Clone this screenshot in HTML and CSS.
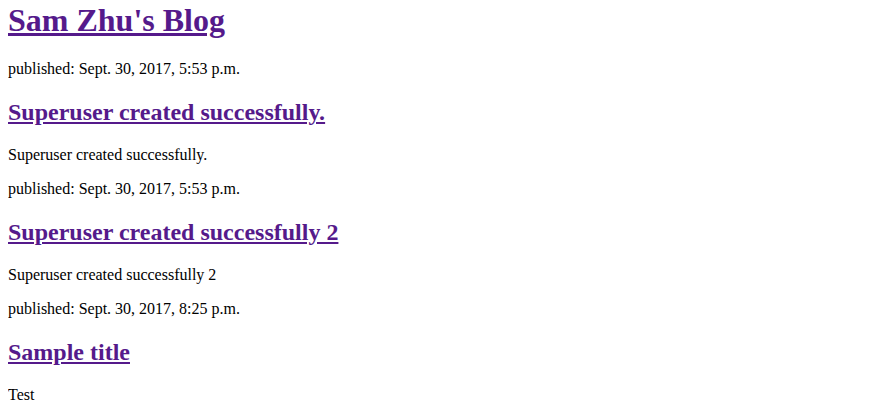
FILE: index.html
```html
<!DOCTYPE html>
<html>
<head>
<meta charset="utf-8">
<link rel="stylesheet" href="styles.css">
</head>
<body>
<h1 class="site-title"><a href="#">Sam Zhu's Blog</a></h1>
<div class="post">
<p>published: Sept. 30, 2017, 5:53 p.m.</p>
<h2><a href="#">Superuser created successfully.</a></h2>
<p>Superuser created successfully.</p>
</div>
<div class="post">
<p>published: Sept. 30, 2017, 5:53 p.m.</p>
<h2><a href="#">Superuser created successfully 2</a></h2>
<p>Superuser created successfully 2</p>
</div>
<div class="post">
<p>published: Sept. 30, 2017, 8:25 p.m.</p>
<h2><a href="#">Sample title</a></h2>
<p>Test</p>
</div>
</body>
</html>
```
FILE: styles.css
```css
body {
  margin: 0 8px 8px;
  font-family: "Liberation Serif", "Times New Roman", serif;
  font-size: 16px;
  color: #000;
  background: #fff;
}
a {
  color: #551a8b;
}
.site-title {
  margin-top: 2px;
}
.post h2 {
  line-height: 28px;
}
```
